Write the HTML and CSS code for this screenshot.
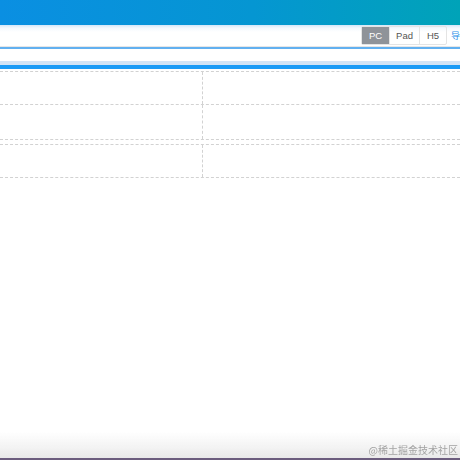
FILE: index.html
```html
<!DOCTYPE html>
<html lang="zh">
<head>
<meta charset="utf-8">
<title>Layout</title>
<link rel="stylesheet" href="styles.css">
</head>
<body>
<div class="header"></div>
<div class="toolbar">
  <div class="switch">
    <span class="btn active">PC</span>
    <span class="btn pad">Pad</span>
    <span class="btn">H5</span>
  </div>
  <span class="nav">导航</span>
</div>
<div class="gap"></div>
<div class="tabbar"></div>
<div class="table">
  <div class="row"><div class="cell left"></div><div class="cell"></div></div>
  <div class="row tall"><div class="cell left"></div><div class="cell"></div></div>
</div>
<div class="table second">
  <div class="row"><div class="cell left"></div><div class="cell"></div></div>
</div>
<div class="footer">
  <span class="mark">@稀土掘金技术社区</span>
</div>
</body>
</html>
```
FILE: styles.css
```css
html, body {
  margin: 0;
  padding: 0;
  background: #fff;
  font-family: "Liberation Sans", Arial, "Noto Sans CJK SC", sans-serif;
}
.header {
  height: 25px;
  background: linear-gradient(90deg, #0a8fe2 0%, #0596d2 55%, #00a3b8 100%);
}
.toolbar {
  height: 21px;
  display: flex;
  align-items: center;
  justify-content: flex-end;
  gap: 4px;
  background: linear-gradient(#d3e6f8 0, #f3f8fd 3px, #fff 7px);
  border-bottom: 1px solid #e6e6e6;
  overflow: hidden;
}
.switch {
  display: flex;
  border: 1px solid #e4e4e4;
  border-radius: 2px;
  height: 17px;
}
.btn {
  display: flex;
  align-items: center;
  justify-content: center;
  font-size: 9.5px;
  color: #555;
  width: 26px;
  border-left: 1px solid #e4e4e4;
}
.btn.pad { width: 29px; }
.btn:first-child { border-left: none; }
.btn.active {
  background: #8f9399;
  color: #fff;
  width: 27px;
}
.nav {
  font-size: 9px;
  color: #2b8fe8;
  width: 9px;
  overflow: hidden;
  white-space: nowrap;
  font-family: "Noto Sans CJK SC", sans-serif;
}
.gap {
  height: 12px;
  border-top: 2px solid #62b0f0;
}
.tabbar {
  height: 4px;
  background: #d2e4f6;
  border-bottom: 4px solid #1b9bf6;
}
.table {
  margin-top: 2px;
  border-top: 1px dashed #d2d2d2;
  border-bottom: 1px dashed #d2d2d2;
}
.table.second {
  margin-top: 4px;
}
.row {
  display: flex;
  height: 32px;
}
.row + .row {
  border-top: 1px dashed #d2d2d2;
}
.row.tall { height: 34px; }
.cell { flex: 1; }
.cell.left {
  flex: 0 0 202px;
  border-right: 1px dashed #d2d2d2;
}
.footer {
  position: fixed;
  left: 0;
  right: 0;
  bottom: 0;
  height: 28px;
  background: linear-gradient(rgba(255,255,255,0) 0, #f3f3f3 60%, #e9e9e9 100%);
  border-bottom: 2px solid #6c5d7e;
  display: flex;
  align-items: flex-end;
  justify-content: flex-end;
  box-sizing: border-box;
}
.mark {
  font-family: "Noto Sans CJK SC", sans-serif;
  font-size: 10px;
  line-height: 14px;
  color: #a3a3a3;
  padding: 0 2px 1px 0;
}
```
